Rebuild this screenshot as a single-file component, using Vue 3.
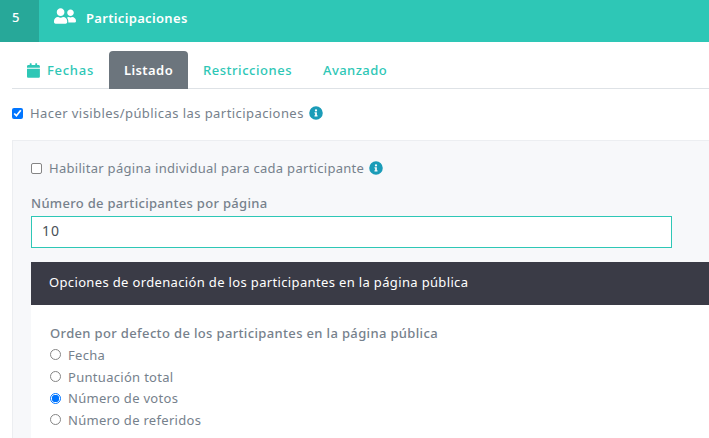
<template>
  <div class="page">
    <header class="head">
      <div class="num">5</div>
      <svg class="users" viewBox="0 0 640 512" width="22" height="18"><path fill="#fff" d="M192 256c61.900 0 112-50.100 112-112S253.900 32 192 32 80 82.100 80 144s50.100 112 112 112zm76.800 32h-8.300c-20.800 10-43.900 16-68.500 16s-47.600-6-68.500-16h-8.300C51.600 288 0 339.600 0 403.200V432c0 26.500 21.500 48 48 48h288c26.500 0 48-21.500 48-48v-28.800c0-63.600-51.600-115.200-115.200-115.200zM480 256c53 0 96-43 96-96s-43-96-96-96-96 43-96 96 43 96 96 96zm48 32h-3.800c-13.900 4.800-28.600 8-44.200 8s-30.300-3.200-44.200-8H432c-20.400 0-39.200 5.900-55.700 15.400 24.400 26.300 39.700 61.200 39.700 99.800v38.400c0 2.200-.5 4.300-.6 6.400H592c26.500 0 48-21.500 48-48 0-61.900-50.100-112-112-112z"/></svg>
      <span class="title">Participaciones</span>
    </header>
    <nav class="tabs">
      <a class="tab first">
        <svg viewBox="0 0 448 512" width="13" height="15"><path fill="#2ec7b6" d="M0 464c0 26.500 21.500 48 48 48h352c26.500 0 48-21.500 48-48V192H0v272zM400 64h-48V16c0-8.800-7.200-16-16-16h-32c-8.800 0-16 7.200-16 16v48H160V16c0-8.800-7.200-16-16-16h-32c-8.800 0-16 7.200-16 16v48H48C21.500 64 0 85.500 0 112v48h448v-48c0-26.500-21.500-48-48-48z"/></svg>
        <span class="fechas">Fechas</span>
      </a>
      <a class="tab active">Listado</a>
      <a class="tab restr">Restricciones</a>
      <a class="tab adv">Avanzado</a>
    </nav>
    <label class="check top">
      <input type="checkbox" checked />
      <span>Hacer visibles/públicas las participaciones</span>
      <svg class="info" viewBox="0 0 512 512" width="14" height="14"><path fill="#1b9cb8" d="M256 8a248 248 0 1 0 0 496 248 248 0 0 0 0-496zm0 110a42 42 0 1 1 0 84 42 42 0 0 1 0-84zm56 254c0 6.600-5.400 12-12 12h-88c-6.600 0-12-5.400-12-12v-24c0-6.600 5.400-12 12-12h12v-64h-12c-6.600 0-12-5.400-12-12v-24c0-6.600 5.400-12 12-12h64c6.600 0 12 5.400 12 12v100h12c6.600 0 12 5.400 12 12v24z"/></svg>
    </label>
    <section class="panel">
      <label class="check inner">
        <input class="box" type="checkbox" />
        <span>Habilitar página individual para cada participante</span>
        <svg class="info" viewBox="0 0 512 512" width="14" height="14"><path fill="#1b9cb8" d="M256 8a248 248 0 1 0 0 496 248 248 0 0 0 0-496zm0 110a42 42 0 1 1 0 84 42 42 0 0 1 0-84zm56 254c0 6.600-5.400 12-12 12h-88c-6.600 0-12-5.400-12-12v-24c0-6.600 5.400-12 12-12h12v-64h-12c-6.600 0-12-5.400-12-12v-24c0-6.600 5.400-12 12-12h64c6.600 0 12 5.400 12 12v100h12c6.600 0 12 5.400 12 12v24z"/></svg>
      </label>
      <div class="label">Número de participantes por página</div>
      <input class="field" type="text" value="10" />
      <div class="bar">Opciones de ordenación de los participantes en la página pública</div>
      <div class="body">
        <div class="label2">Orden por defecto de los participantes en la página pública</div>
        <label v-for="o in options" :key="o" class="radio">
          <input type="radio" name="ord" :checked="o === 'Número de votos'" />
          <span>{{ o }}</span>
        </label>
      </div>
    </section>
  </div>
</template>

<script setup>
const options = ['Fecha', 'Puntuación total', 'Número de votos', 'Número de referidos']
</script>

<style>
html, body { margin: 0; overflow: hidden; background: #fff; }
</style>

<style scoped>
.page {
  width: 709px;
  height: 438px;
  overflow: hidden;
  font-family: "Noto Sans", "Open Sans", sans-serif;
  font-size: 13px;
  letter-spacing: 0.43px;
  color: #76818c;
}
.head {
  height: 42px;
  background: #2ec7b6;
  display: flex;
  align-items: flex-start;
  color: #fff;
}
.num {
  width: 39px;
  height: 42px;
  background: #27a899;
  box-sizing: border-box;
  padding: 8px 0 0 12px;
  font-weight: 500;
  font-size: 13px;
}
.users { margin: 7px 0 0 15px; }
.title { margin: 9px 0 0 10px; font-weight: 600; font-size: 13px; letter-spacing: .33px; }
.tabs {
  display: flex;
  margin: 9px 0 0 12px;
  height: 37px;
  border-bottom: 1px solid #dee2e6;
  color: #2ec7b6;
  font-weight: 500;
}
.tab {
  display: flex;
  align-items: center;
  gap: 7px;
  padding: 0 15px;
  height: 38px;
  box-sizing: border-box;
  border-radius: 4px 4px 0 0;
}
.tab.first { width: 97px; }
.fechas { letter-spacing: .75px; }
.restr { letter-spacing: .53px; }
.adv { padding-left: 16px; }
.tab.active { background: #6c757d; color: #fff; font-weight: 600; width: 79px; justify-content: center; padding: 0; }
.check { display: flex; align-items: center; }
.check input { margin: 0 7px 0 0; width: 11px; height: 11px; accent-color: #0075ff; }
.check .info { margin-left: 5px; }
.check .box {
  appearance: none;
  box-sizing: border-box;
  background: #fff;
  border: 1px solid #858585;
  border-radius: 2px;
}
.top { margin: 15px 0 0 12px; height: 18px; }
.panel {
  margin: 18px 0 0 12px;
  background: #f7f8fa;
  border: 1px solid #eceef1;
  border-right: 0;
  height: 400px;
  padding: 18px 0 0 18px;
}
.inner { height: 18px; letter-spacing: .29px; }
.label { margin-top: 17px; font-weight: 500; height: 19px; line-height: 19px; letter-spacing: .3px; }
.field {
  display: block;
  width: 641px;
  height: 32px;
  box-sizing: border-box;
  margin-top: 3px;
  border: 1px solid #2ec7b6;
  background: #fff;
  padding: 0 10px 4px;
  font: inherit;
  font-size: 14px;
  letter-spacing: 1px;
  color: #495057;
  outline: none;
}
.bar {
  margin-top: 14px;
  height: 43px;
  line-height: 40px;
  background: #3a3b46;
  color: #fff;
  padding-left: 18px;
  letter-spacing: .35px;
}
.body { background: #fff; height: 140px; padding: 19px 0 0 19px; }
.label2 { font-weight: 500; height: 19px; line-height: 19px; margin-bottom: 1px; letter-spacing: .35px; }
.radio { display: flex; align-items: center; height: 21.700px; letter-spacing: .3px; }
.radio input {
  appearance: none;
  box-sizing: border-box;
  margin: 0 7px 0 0;
  width: 11px;
  height: 11px;
  border: 1px solid #858585;
  border-radius: 50%;
  background: #fff;
}
.radio input:checked {
  border-color: #0075ff;
  background: radial-gradient(circle, #0075ff 0 3.500px, #fff 4px);
}
</style>
